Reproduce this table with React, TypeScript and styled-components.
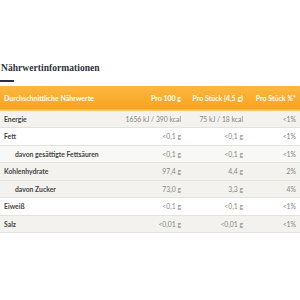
import React from "react";
import styled, { createGlobalStyle } from "styled-components";

const Global = createGlobalStyle`
  html, body { margin: 0; padding: 0; background: #ffffff; }
  body { font-family: "Lato", "Open Sans", sans-serif; }
`;

const Page = styled.div`
  width: 300px;
  padding-top: 61px;
`;

const Title = styled.h2`
  margin: 0 0 0 1px;
  font-family: "Liberation Serif", "DejaVu Serif", serif;
  font-weight: 700;
  font-size: 9.5px;
  line-height: 14px;
  color: #2c333b;
  letter-spacing: 0.05px;
`;

const Underline = styled.div`
  width: 14px;
  height: 2px;
  margin-top: 5px;
  background: #2c333b;
`;

const Table = styled.table`
  width: 300px;
  margin-top: 4px;
  border-collapse: collapse;
  table-layout: fixed;
`;

const HeadRow = styled.tr`
  height: 24px;
  background: linear-gradient(#fdb741, #f8a31d);
  border-bottom: 1px solid #fcc66a;
`;

const Th = styled.th<{ $left?: boolean }>`
  padding: 0 4px;
  font-weight: 700;
  font-size: 7px;
  color: #ffffff;
  text-align: ${(p) => (p.$left ? "left" : "right")};
  white-space: nowrap;
`;

const Row = styled.tr<{ $tone: "gray" | "white" | "light" }>`
  height: 17.5px;
  background: ${(p) =>
    p.$tone === "gray" ? "#f3f2ef" : p.$tone === "light" ? "#f8f8f6" : "#ffffff"};
  border-bottom: 1px solid #e2e2e0;
`;

const Label = styled.td<{ $sub?: boolean }>`
  padding: 0 4px 0 ${(p) => (p.$sub ? "15px" : "4px")};
  font-weight: 700;
  font-size: 6.8px;
  color: #444444;
  white-space: nowrap;
`;

const Value = styled.td`
  padding: 0 4px 0 0;
  font-size: 6.8px;
  color: #858585;
  text-align: right;
  white-space: nowrap;
`;

type R = { label: string; sub?: boolean; tone: "gray" | "white" | "light"; v: [string, string, string] };

const rows: R[] = [
  { label: "Energie", tone: "gray", v: ["1656 kJ / 390 kcal", "75 kJ / 18 kcal", "<1%"] },
  { label: "Fett", tone: "white", v: ["<0,1 g", "<0,1 g", "<1%"] },
  { label: "davon gesättigte Fettsäuren", sub: true, tone: "light", v: ["<0,1 g", "<0,1 g", "<1%"] },
  { label: "Kohlenhydrate", tone: "gray", v: ["97,4 g", "4,4 g", "2%"] },
  { label: "davon Zucker", sub: true, tone: "gray", v: ["73,0 g", "3,3 g", "4%"] },
  { label: "Eiweiß", tone: "white", v: ["<0,1 g", "<0,1 g", "<1%"] },
  { label: "Salz", tone: "gray", v: ["<0,01 g", "<0,01 g", "<1%"] },
];

export default function App() {
  return (
    <Page>
      <Global />
      <Title>Nährwertinformationen</Title>
      <Underline />
      <Table>
        <colgroup>
          <col style={{ width: 110 }} />
          <col style={{ width: 75 }} />
          <col style={{ width: 62 }} />
          <col style={{ width: 53 }} />
        </colgroup>
        <thead>
          <HeadRow>
            <Th $left>Durchschnittliche Nährwerte</Th>
            <Th>Pro 100 g</Th>
            <Th>Pro Stück (4,5 g)</Th>
            <Th>Pro Stück %*</Th>
          </HeadRow>
        </thead>
        <tbody>
          {rows.map((r) => (
            <Row key={r.label} $tone={r.tone}>
              <Label $sub={r.sub}>{r.label}</Label>
              <Value>{r.v[0]}</Value>
              <Value>{r.v[1]}</Value>
              <Value>{r.v[2]}</Value>
            </Row>
          ))}
        </tbody>
      </Table>
    </Page>
  );
}
